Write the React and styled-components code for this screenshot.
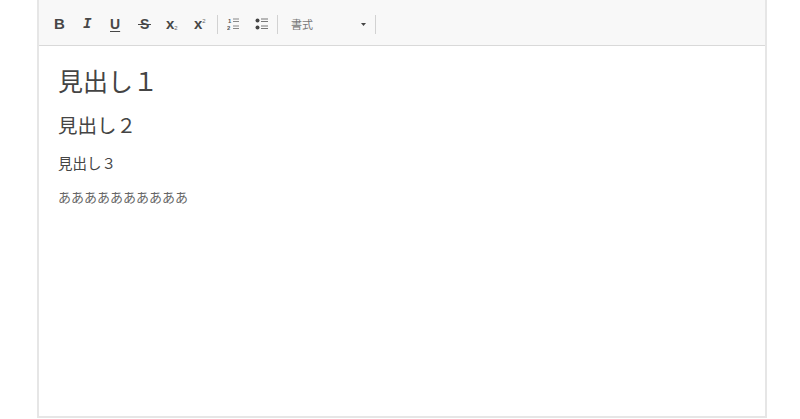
import React from "react";
import styled, { createGlobalStyle } from "styled-components";

const GlobalStyle = createGlobalStyle`
  html, body {
    margin: 0;
    height: 100%;
    background: #fff;
    overflow: hidden;
  }
  #root {
    height: 100%;
  }
`;

const jpFont = `"Liberation Sans", "Noto Sans CJK JP", sans-serif`;

const Page = styled.div`
  height: 419px;
  padding: 0 33px 0 37px;
  box-sizing: border-box;
  font-family: ${jpFont};
`;

const Editor = styled.div`
  height: 418px;
  border: 2px solid #e6e6e6;
  border-top: none;
  box-sizing: border-box;
  display: flex;
  flex-direction: column;
`;

const Toolbar = styled.div`
  height: 46px;
  flex: none;
  box-sizing: border-box;
  background: #f8f8f8;
  border-bottom: 1px solid #d9d9d9;
  display: flex;
  align-items: center;
  padding: 3px 0 0 15px;
  color: #444;
`;

const Tool = styled.span`
  width: ${({ $w }) => $w || 28}px;
  height: 20px;
  flex: none;
  display: flex;
  align-items: center;
  font-size: 13px;
  line-height: 20px;
  color: #474747;
`;

const Glyph = styled.span`
  font-weight: 700;
  font-size: 15px;
  font-family: "Liberation Sans", sans-serif;
`;

const ItalicGlyph = styled(Glyph)`
  font-family: "Liberation Mono", monospace;
  font-style: italic;
  font-size: 14px;
  padding-left: 1px;
`;

const UnderGlyph = styled(Glyph)`
  font-size: 14px;
  text-decoration: underline;
  text-underline-offset: 2px;
  text-decoration-thickness: 1px;
`;

const StrikeGlyph = styled(Glyph)`
  position: relative;
  padding: 0 2px;
  font-size: 14px;

  &::after {
    content: "";
    position: absolute;
    left: 0;
    right: 0;
    top: 10px;
    height: 1px;
    background: #474747;
  }
`;

const Script = styled.span`
  font-size: 6px;
  font-weight: 400;
  color: #666;
  position: relative;
  top: ${({ $up }) => ($up ? -3 : 4)}px;
`;

const Sep = styled.span`
  width: 1px;
  height: 19px;
  flex: none;
  background: #d2d2d2;
  margin: ${({ $m }) => $m || "0"};
`;

const Format = styled.span`
  width: 88px;
  flex: none;
  display: flex;
  align-items: center;
  justify-content: space-between;
  box-sizing: border-box;
  padding: 0 0 0 13px;
  font-size: 11px;
  color: #777;
`;

const Body = styled.div`
  flex: 1;
  padding: 18px 19px 0;
  color: #444;
  display: flex;
  flex-direction: column;
  align-items: flex-start;
`;

const Heading1 = styled.h1`
  margin: 0;
  font-size: 25px;
  line-height: 36px;
  font-weight: 400;
`;

const Heading2 = styled.h2`
  margin: 12px 0 0;
  font-size: 19.5px;
  line-height: 28px;
  font-weight: 400;
`;

const Heading3 = styled.h3`
  margin: 13px 0 0;
  font-size: 14.5px;
  line-height: 22px;
  font-weight: 400;
`;

const Para = styled.p`
  margin: 13px 0 0;
  font-size: 13px;
  line-height: 20px;
  color: #666;
`;

const NumberedIcon = () => (
  <svg width="14" height="14" viewBox="0 0 14 14">
    <text x="1" y="6" fontSize="6" fontWeight="700" fill="#555" fontFamily="Liberation Sans">1</text>
    <text x="0" y="13" fontSize="6" fontWeight="700" fill="#555" fontFamily="Liberation Sans">2</text>
    <path d="M6 2h6M6 4.5h6M6 9h6M6 11.5h6" stroke="#888" strokeWidth="1" />
  </svg>
);

const BulletIcon = () => (
  <svg width="14" height="14" viewBox="0 0 14 14">
    <circle cx="2.5" cy="3.5" r="2" fill="#444" />
    <circle cx="2.5" cy="10.5" r="2" fill="#444" />
    <path d="M6 2h7M6 4.5h7M6 9h7M6 11.5h7" stroke="#777" strokeWidth="1" />
  </svg>
);

const Caret = () => (
  <svg width="5" height="3" viewBox="0 0 5 3">
    <path d="M0 0h5L2.5 3z" fill="#444" />
  </svg>
);

const App = () => {
  return (
    <Page>
      <GlobalStyle />
      <Editor>
        <Toolbar>
          <Tool><Glyph>B</Glyph></Tool>
          <Tool><ItalicGlyph>I</ItalicGlyph></Tool>
          <Tool><UnderGlyph>U</UnderGlyph></Tool>
          <Tool><StrikeGlyph>S</StrikeGlyph></Tool>
          <Tool><Glyph>x</Glyph><Script>2</Script></Tool>
          <Tool $w={23}><Glyph>x</Glyph><Script $up>2</Script></Tool>
          <Sep $m="0 9px 0 0" />
          <Tool><NumberedIcon /></Tool>
          <Tool $w={22}><BulletIcon /></Tool>
          <Sep />
          <Format>
            書式
            <Caret />
          </Format>
          <Sep $m="0 0 0 9px" />
        </Toolbar>
        <Body>
          <Heading1>見出し１</Heading1>
          <Heading2>見出し２</Heading2>
          <Heading3>見出し３</Heading3>
          <Para>ああああああああああ</Para>
        </Body>
      </Editor>
    </Page>
  );
};

export default App;
